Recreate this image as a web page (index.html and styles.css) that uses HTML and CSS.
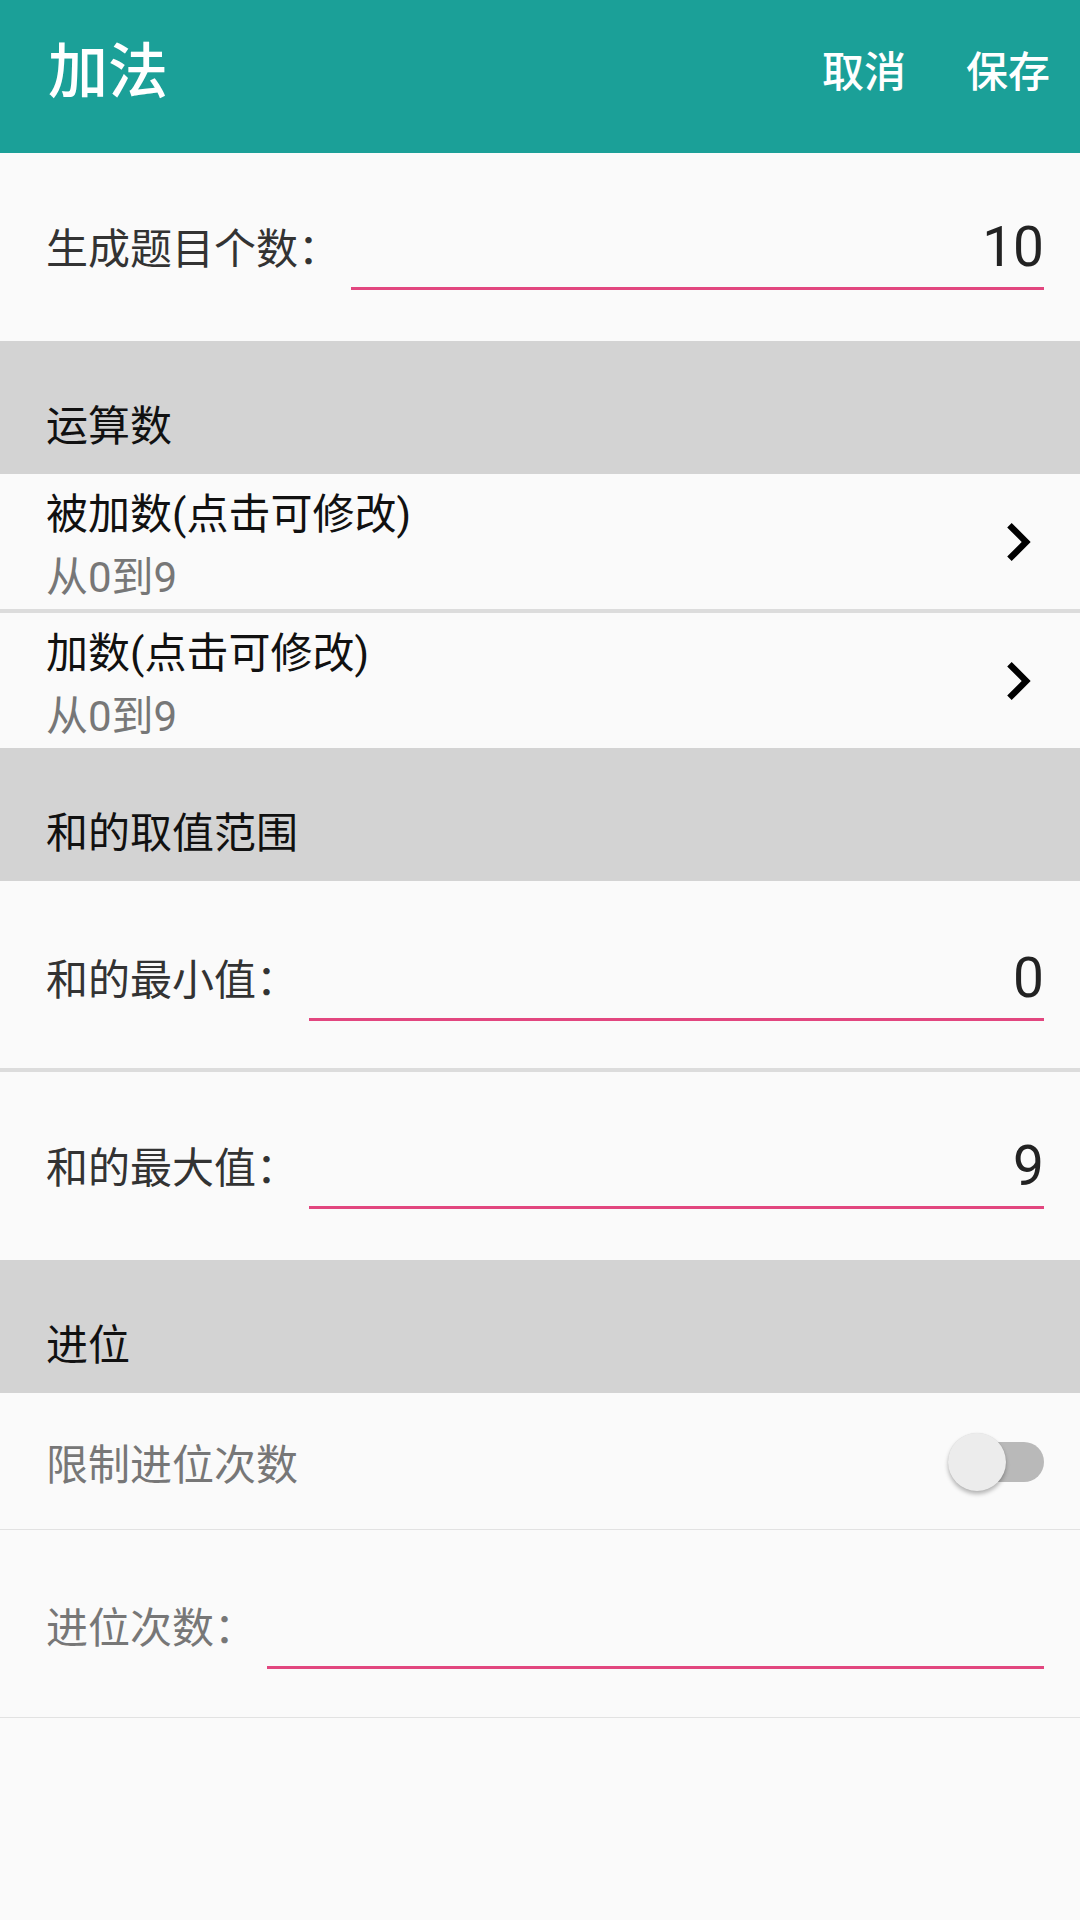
FILE: index.html
```html
<!DOCTYPE html>
<html lang="zh-CN">
<head>
<meta charset="utf-8">
<title>加法</title>
<link rel="stylesheet" href="styles.css">
</head>
<body>
<header class="toolbar">
  <h1 class="toolbar-title">加法</h1>
  <nav class="toolbar-actions">
    <span class="action">取消</span>
    <span class="action">保存</span>
  </nav>
</header>

<main class="content">
  <div class="field">
    <span class="field-label">生成题目个数：</span>
    <div class="field-input">10</div>
  </div>

  <div class="section">运算数</div>

  <div class="item item--divided">
    <div class="item-text">
      <div class="item-title">被加数(点击可修改)</div>
      <div class="item-sub">从0到9</div>
    </div>
    <svg class="chevron" viewBox="0 0 24 24"><path d="M10 6L8.59 7.41 13.17 12l-4.58 4.59L10 18l6-6z"/></svg>
  </div>
  <div class="item">
    <div class="item-text">
      <div class="item-title">加数(点击可修改)</div>
      <div class="item-sub">从0到9</div>
    </div>
    <svg class="chevron" viewBox="0 0 24 24"><path d="M10 6L8.59 7.41 13.17 12l-4.58 4.59L10 18l6-6z"/></svg>
  </div>

  <div class="section">和的取值范围</div>

  <div class="field field--divided">
    <span class="field-label">和的最小值：</span>
    <div class="field-input">0</div>
  </div>
  <div class="field">
    <span class="field-label">和的最大值：</span>
    <div class="field-input">9</div>
  </div>

  <div class="section">进位</div>

  <div class="switch-row">
    <span class="switch-label">限制进位次数</span>
    <div class="switch">
      <div class="switch-track"></div>
      <div class="switch-thumb"></div>
    </div>
  </div>
  <div class="field field--last">
    <span class="field-label field-label--muted">进位次数：</span>
    <div class="field-input"></div>
  </div>
</main>
</body>
</html>
```

FILE: styles.css
```css
* {
  box-sizing: border-box;
}

html, body {
  margin: 0;
  padding: 0;
  background: #fafafa;
}

body {
  width: 1080px;
  min-height: 1920px;
  font-family: Roboto, "Noto Sans CJK SC", sans-serif;
}

/* ---------- toolbar ---------- */
.toolbar {
  display: flex;
  align-items: center;
  height: 153px;
  padding: 0 0 8px 48px;
  background: #1ba098;
  color: #ffffff;
}

.toolbar-title {
  flex: 1;
  margin: 0;
  font-size: 60px;
  line-height: 60px;
  font-weight: 500;
}

.toolbar-actions {
  display: flex;
}

.action {
  padding: 0 30px;
  font-size: 42px;
  line-height: 42px;
  font-weight: 500;
}

/* ---------- edit fields ---------- */
.field {
  display: flex;
  align-items: flex-end;
  height: 188px;
  padding: 0 36px 51px 46px;
  background: #fafafa;
}

.field--divided {
  height: 191px;
  padding-bottom: 47px;
  border-bottom: 4px solid #dcdcdc;
}

.field--last {
  height: 188px;
  padding-bottom: 48px;
  border-bottom: 1px solid #e2e2e2;
}

.field-label {
  margin-bottom: 20px;
  font-size: 42px;
  line-height: 41px;
  color: #333333;
  white-space: nowrap;
}

.field-label--muted {
  color: #777777;
}

.field-input {
  flex: 1;
  height: 75px;
  margin-left: 11px;
  padding-bottom: 8px;
  border-bottom: 3px solid #e2467f;
  text-align: right;
  font-size: 55px;
  line-height: 64px;
  color: #222222;
}

/* ---------- section headers ---------- */
.section {
  height: 133px;
  padding: 65px 0 0 46px;
  background: #d3d3d3;
  font-size: 42px;
  line-height: 41px;
  color: #111111;
}

/* ---------- list items ---------- */
.item {
  display: flex;
  align-items: center;
  height: 135px;
  padding: 0 24px 0 46px;
  background: #fafafa;
}

.item--divided {
  height: 139px;
  border-bottom: 4px solid #dcdcdc;
}

.item-text {
  flex: 1;
  align-self: flex-start;
  padding-top: 20px;
}

.item-title {
  font-size: 42px;
  line-height: 41px;
  color: #111111;
}

.item-sub {
  margin-top: 22px;
  font-size: 42px;
  line-height: 41px;
  color: #777777;
}

.chevron {
  width: 76px;
  height: 76px;
  fill: #000000;
}

/* ---------- switch row ---------- */
.switch-row {
  display: flex;
  align-items: center;
  justify-content: space-between;
  height: 137px;
  padding: 2px 36px 0 46px;
  border-bottom: 1px solid #e2e2e2;
  background: #fafafa;
}

.switch-label {
  padding-top: 6px;
  font-size: 42px;
  line-height: 41px;
  color: #777777;
}

.switch {
  position: relative;
  width: 96px;
  height: 58px;
}

.switch-track {
  position: absolute;
  right: 0;
  top: 9px;
  width: 94px;
  height: 40px;
  border-radius: 20px;
  background: #b9b9b9;
}

.switch-thumb {
  position: absolute;
  left: 0;
  top: 0;
  width: 58px;
  height: 58px;
  border-radius: 50%;
  background: #ececec;
  box-shadow: 0 3px 4px rgba(0, 0, 0, 0.28), 0 0 1px rgba(0, 0, 0, 0.12);
}
```
